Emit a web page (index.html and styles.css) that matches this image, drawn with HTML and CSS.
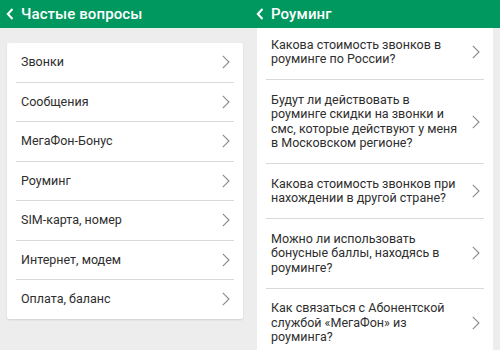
FILE: index.html
```html
<!DOCTYPE html>
<html lang="ru">
<head>
    <meta charset="UTF-8">
    <meta name="viewport" content="width=device-width, initial-scale=1.0">
    <title>Помощь</title>
    <link rel="stylesheet" href="styles.css">
</head>
<body>

<div class="screens">
    <!-- Экран 1: список разделов -->
    <section class="screen">
        <header class="topbar">
            <svg class="back" width="8" height="12" viewBox="0 0 8 12"><path d="M6.5 1 L1.8 6 L6.5 11" fill="none" stroke="#fff" stroke-width="2"/></svg>
            <span class="topbar-title">Частые вопросы</span>
        </header>
        <div class="content content-padded">
            <ul class="card">
                <li class="row"><span class="row-text">Звонки</span><svg class="chevron" width="8" height="14" viewBox="0 0 8 14"><path d="M0.8 0.8 L7 7 L0.8 13.2" fill="none" stroke="#8a8a8a" stroke-width="1.1"/></svg></li>
                <li class="row"><span class="row-text">Сообщения</span><svg class="chevron" width="8" height="14" viewBox="0 0 8 14"><path d="M0.8 0.8 L7 7 L0.8 13.2" fill="none" stroke="#8a8a8a" stroke-width="1.1"/></svg></li>
                <li class="row"><span class="row-text">МегаФон-Бонус</span><svg class="chevron" width="8" height="14" viewBox="0 0 8 14"><path d="M0.8 0.8 L7 7 L0.8 13.2" fill="none" stroke="#8a8a8a" stroke-width="1.1"/></svg></li>
                <li class="row"><span class="row-text">Роуминг</span><svg class="chevron" width="8" height="14" viewBox="0 0 8 14"><path d="M0.8 0.8 L7 7 L0.8 13.2" fill="none" stroke="#8a8a8a" stroke-width="1.1"/></svg></li>
                <li class="row"><span class="row-text">SIM-карта, номер</span><svg class="chevron" width="8" height="14" viewBox="0 0 8 14"><path d="M0.8 0.8 L7 7 L0.8 13.2" fill="none" stroke="#8a8a8a" stroke-width="1.1"/></svg></li>
                <li class="row"><span class="row-text">Интернет, модем</span><svg class="chevron" width="8" height="14" viewBox="0 0 8 14"><path d="M0.8 0.8 L7 7 L0.8 13.2" fill="none" stroke="#8a8a8a" stroke-width="1.1"/></svg></li>
                <li class="row"><span class="row-text">Оплата, баланс</span><svg class="chevron" width="8" height="14" viewBox="0 0 8 14"><path d="M0.8 0.8 L7 7 L0.8 13.2" fill="none" stroke="#8a8a8a" stroke-width="1.1"/></svg></li>
            </ul>
        </div>
    </section>

    <!-- Экран 2: вопросы раздела -->
    <section class="screen">
        <header class="topbar">
            <svg class="back" width="8" height="12" viewBox="0 0 8 12"><path d="M6.5 1 L1.8 6 L6.5 11" fill="none" stroke="#fff" stroke-width="2"/></svg>
            <span class="topbar-title">Роуминг</span>
        </header>
        <div class="content">
            <ul class="card card-full">
                <li class="row question"><span class="row-text">Какова стоимость звонков в роуминге по России?</span><svg class="chevron" width="8" height="14" viewBox="0 0 8 14"><path d="M0.8 0.8 L7 7 L0.8 13.2" fill="none" stroke="#8a8a8a" stroke-width="1.1"/></svg></li>
                <li class="row question"><span class="row-text">Будут ли действовать в роуминге скидки на звонки и смс, которые действуют у меня в Московском регионе?</span><svg class="chevron" width="8" height="14" viewBox="0 0 8 14"><path d="M0.8 0.8 L7 7 L0.8 13.2" fill="none" stroke="#8a8a8a" stroke-width="1.1"/></svg></li>
                <li class="row question"><span class="row-text">Какова стоимость звонков при нахождении в другой стране?</span><svg class="chevron" width="8" height="14" viewBox="0 0 8 14"><path d="M0.8 0.8 L7 7 L0.8 13.2" fill="none" stroke="#8a8a8a" stroke-width="1.1"/></svg></li>
                <li class="row question"><span class="row-text">Можно ли использовать бонусные баллы, находясь в роуминге?</span><svg class="chevron" width="8" height="14" viewBox="0 0 8 14"><path d="M0.8 0.8 L7 7 L0.8 13.2" fill="none" stroke="#8a8a8a" stroke-width="1.1"/></svg></li>
                <li class="row question"><span class="row-text">Как связаться с Абонентской службой «МегаФон» из роуминга?</span><svg class="chevron" width="8" height="14" viewBox="0 0 8 14"><path d="M0.8 0.8 L7 7 L0.8 13.2" fill="none" stroke="#8a8a8a" stroke-width="1.1"/></svg></li>
            </ul>
        </div>
    </section>
</div>

</body>
</html>
```

FILE: styles.css
```css
/* Цвета */
:root {
    --green: #00985f;
    --bg: #ededed;
    --card: #ffffff;
    --text: #2e2e2e;
    --line: #d9d9d9;
}

body {
    margin: 0;
    font-family: Roboto, 'Liberation Sans', sans-serif;
    background: var(--bg);
    color: var(--text);
}

.screens {
    display: grid;
    grid-template-columns: 250px 250px;
    height: 350px;
    overflow: hidden;
}

.screen {
    display: flex;
    flex-direction: column;
    height: 350px;
    overflow: hidden;
}

/* Шапка */
.topbar {
    height: 28px;
    flex-shrink: 0;
    background: var(--green);
    display: flex;
    align-items: center;
    padding-left: 6px;
    gap: 7px;
}

.topbar-title {
    color: #fff;
    font-size: 15px;
    font-weight: 500;
    letter-spacing: 0.1px;
}

/* Контент */
.content {
    flex: 1;
    padding: 0 7px;
}

.content-padded {
    padding-top: 15px;
}

.card {
    list-style: none;
    margin: 0;
    padding: 0 9px;
    background: var(--card);
    border-radius: 2px;
    box-shadow: 0 1px 2px rgba(0, 0, 0, 0.12);
}

.card-full {
    height: 100%;
    border-radius: 0;
    box-shadow: none;
}

.row {
    display: flex;
    align-items: center;
    justify-content: space-between;
    padding: 12px 4px 12px 5px;
    font-size: 12.5px;
    line-height: 14.5px;
    border-bottom: 1px solid var(--line);
}

.row:last-child {
    border-bottom: none;
}

.question {
    padding-top: 12.5px;
    padding-bottom: 12.5px;
}

.question:first-child {
    padding-top: 9.5px;
}

.question .row-text {
    width: 188px;
}

.chevron {
    flex-shrink: 0;
}
```
